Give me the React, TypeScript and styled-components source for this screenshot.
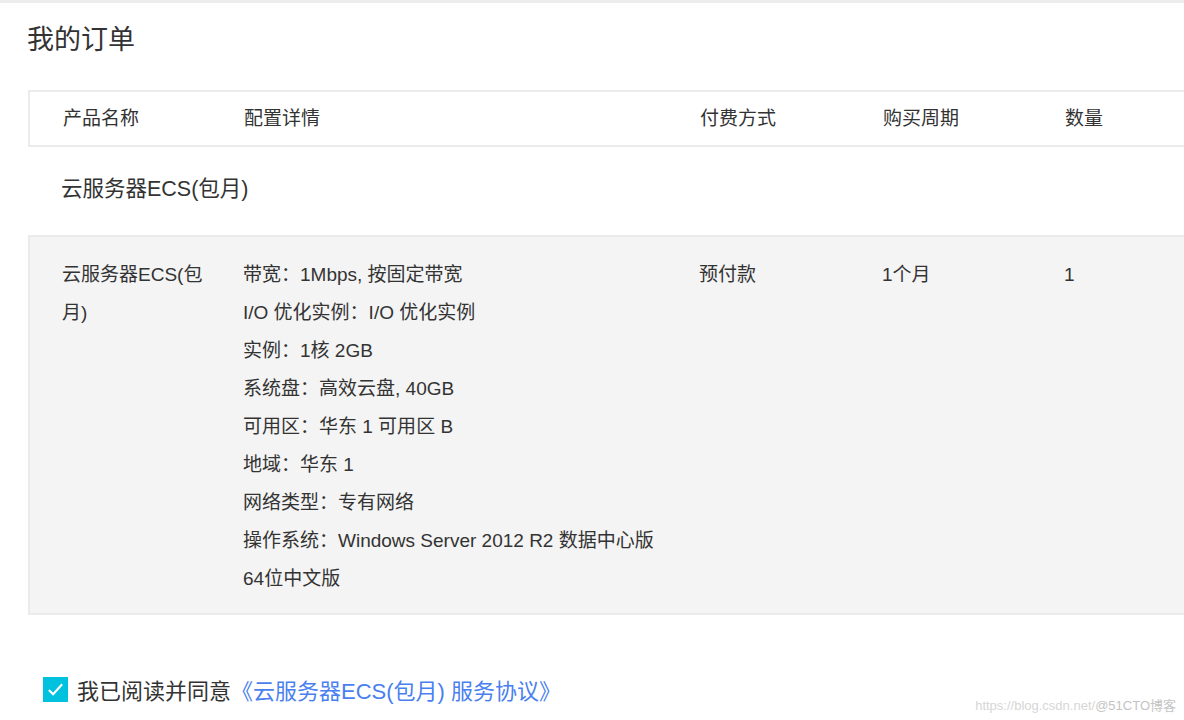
import React from 'react';
import styled, { createGlobalStyle } from 'styled-components';

const GlobalStyle = createGlobalStyle`
  html, body {
    margin: 0;
    padding: 0;
    background: #fff;
    overflow: hidden;
  }
  body {
    font-family: "Liberation Sans", "Noto Sans CJK SC", sans-serif;
    color: #333;
  }
`;

const Page = styled.div`
  width: 1184px;
  height: 720px;
  border-top: 3px solid #ededed;
  box-sizing: border-box;
  overflow: hidden;
  position: relative;
`;

const Title = styled.h1`
  margin: 0;
  padding: 22px 0 0 27px;
  height: 87px;
  box-sizing: border-box;
  font-size: 27px;
  font-weight: normal;
  line-height: 30px;
  color: #333;
`;

const TableWrap = styled.div`
  padding-left: 28px;
`;

const Table = styled.table`
  width: 1200px;
  border-collapse: collapse;
  table-layout: fixed;
  font-size: 19px;
  color: #333;
`;

const HeadRow = styled.tr`
  height: 55px;
  border: 2px solid #ebebeb;
`;

const HeadCell = styled.th<{ $w: number }>`
  width: ${(p) => p.$w}px;
  padding: 0 0 4px 33px;
  text-align: left;
  font-weight: normal;
  vertical-align: middle;
  box-sizing: border-box;
`;

const GroupRow = styled.tr`
  height: 90px;
`;

const GroupCell = styled.td`
  padding: 0 0 10px 32px;
  font-size: 21.5px;
  vertical-align: middle;
`;

const DetailRow = styled.tr`
  background: #f4f4f4;
  border: 2px solid #ebebeb;
`;

const Cell = styled.td`
  padding: 19px 4px 15px 32px;
  vertical-align: top;
  line-height: 38px;
  box-sizing: border-box;
`;

const SpecLine = styled.div`
  white-space: nowrap;
`;

const Agree = styled.div`
  display: flex;
  align-items: center;
  gap: 9px;
  margin: 58px 0 0 43px;
  font-size: 22px;
  color: #333;
`;

const CheckBox = styled.span`
  width: 25px;
  height: 25px;
  background: #00c1de;
  display: flex;
  align-items: center;
  justify-content: center;
`;

const Link = styled.a`
  color: #4a7ff0;
  text-decoration: none;
`;

const Watermark = styled.div`
  position: absolute;
  right: 8px;
  bottom: 6px;
  font-size: 13px;
  color: #d6d6d6;
  span {
    color: #c4c4c4;
  }
`;

const columns = [
  { label: '产品名称', w: 182 },
  { label: '配置详情', w: 456 },
  { label: '付费方式', w: 183 },
  { label: '购买周期', w: 182 },
  { label: '数量', w: 197 },
];

const specs = [
  '带宽：1Mbps, 按固定带宽',
  'I/O 优化实例：I/O 优化实例',
  '实例：1核 2GB',
  '系统盘：高效云盘, 40GB',
  '可用区：华东 1 可用区 B',
  '地域：华东 1',
  '网络类型：专有网络',
  '操作系统：Windows Server 2012 R2 数据中心版',
  '64位中文版',
];

const App = () => {
  return (
    <Page>
      <GlobalStyle />
      <Title>我的订单</Title>
      <TableWrap>
        <Table>
          <thead>
            <HeadRow>
              {columns.map((c) => (
                <HeadCell key={c.label} $w={c.w}>
                  {c.label}
                </HeadCell>
              ))}
            </HeadRow>
          </thead>
          <tbody>
            <GroupRow>
              <GroupCell colSpan={5}>云服务器ECS(包月)</GroupCell>
            </GroupRow>
            <DetailRow>
              <Cell>云服务器ECS(包月)</Cell>
              <Cell>
                {specs.map((s) => (
                  <SpecLine key={s}>{s}</SpecLine>
                ))}
              </Cell>
              <Cell>预付款</Cell>
              <Cell>1个月</Cell>
              <Cell>1</Cell>
            </DetailRow>
          </tbody>
        </Table>
      </TableWrap>
      <Agree>
        <CheckBox>
          <svg width="19" height="19" viewBox="0 0 20 20">
            <path d="M3 10.5l4.5 4.5L17 4.5" fill="none" stroke="#fff" strokeWidth="2.2" />
          </svg>
        </CheckBox>
        <span>
          我已阅读并同意<Link href="#">《云服务器ECS(包月) 服务协议》</Link>
        </span>
      </Agree>
      <Watermark>
        https://blog.csdn.net/<span>@51CTO博客</span>
      </Watermark>
    </Page>
  );
};

export default App;
